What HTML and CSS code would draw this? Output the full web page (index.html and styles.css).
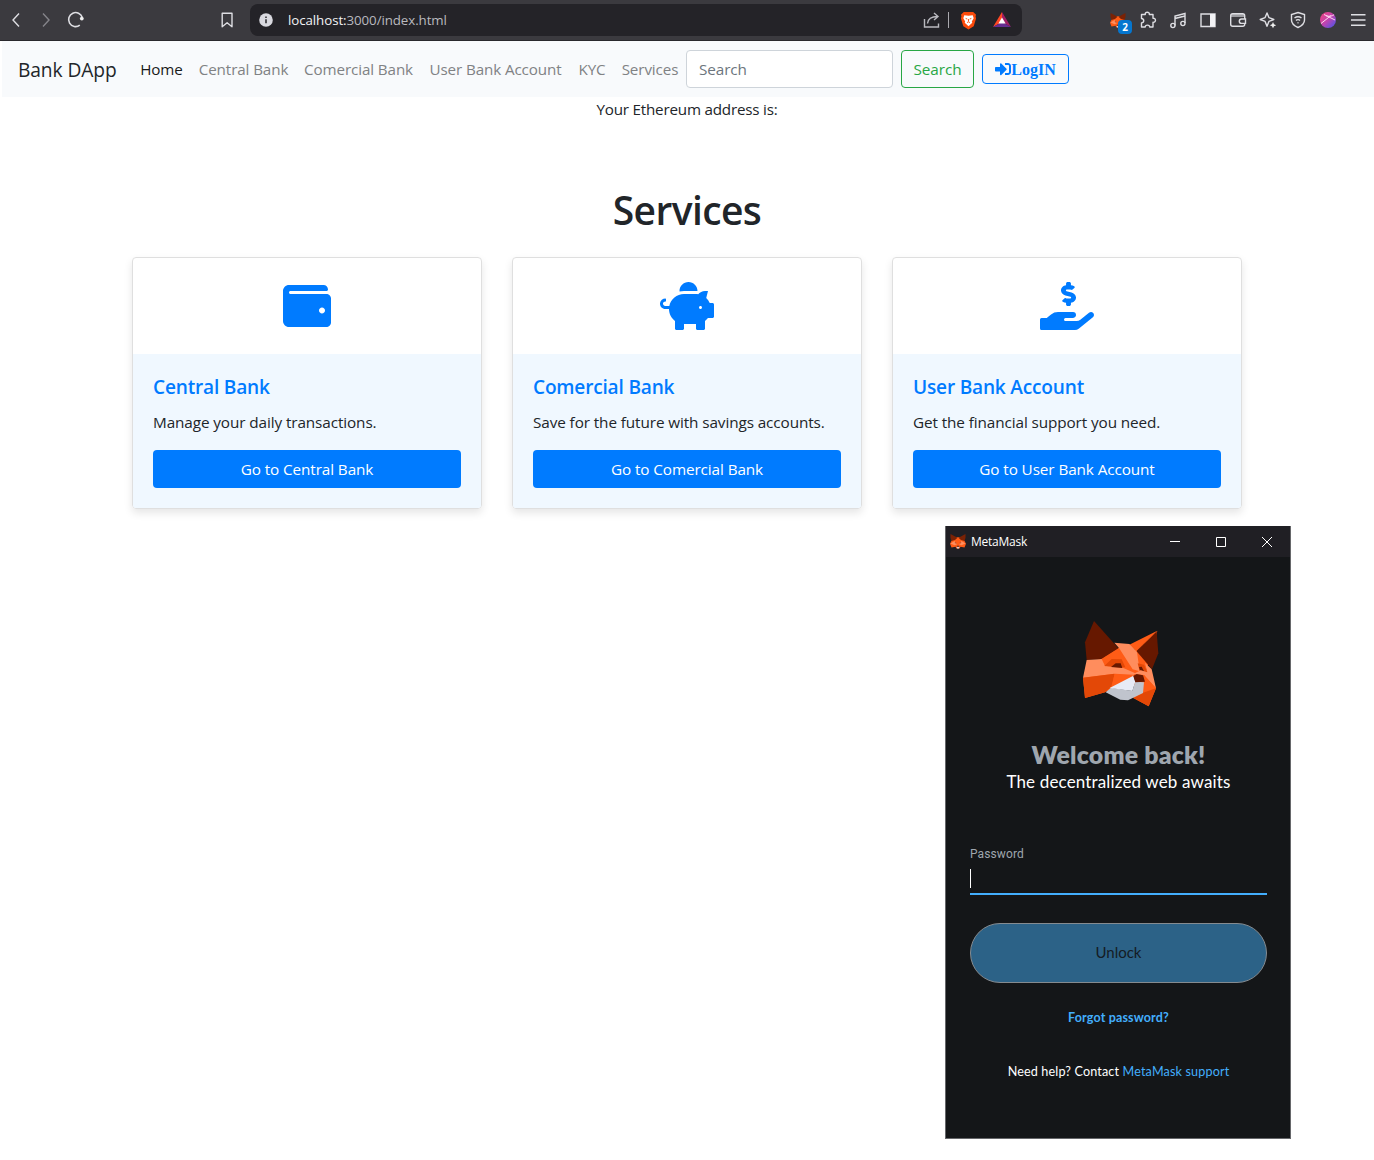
FILE: index.html
```html
<!DOCTYPE html>
<html lang="en">
<head>
<meta charset="utf-8">
<title>Bank DApp</title>
<link rel="stylesheet" href="styles.css">
</head>
<body>
<svg class="defs" width="0" height="0" aria-hidden="true">
  <symbol id="fox" viewBox="0 0 32 32" preserveAspectRatio="none">
    <path fill="#ff5c16" d="M4 13l7-6h10l7 6 4 8-3 8-8-2-2 4h-6l-2-4-8 2-3-8z"/>
    <path fill="#7a2205" d="M1 0l14 8-5 5-7 2-2-7zM31 0l-14 8 5 5 7 2 2-7z"/>
    <path fill="#ff8d5d" d="M1 20l8-5 5 7-5 2zM31 20l-8-5-5 7 5 2z"/>
    <path fill="#8a2a0a" d="M9 17l4 2-1 2zM23 17l-4 2 1 2z"/>
    <path fill="#d9cfd2" d="M13 27h6l-1 4h-4z"/>
    <path fill="#5a2418" d="M14 25h4l1 2h-6z"/>
  </symbol>
</svg>

<header class="browser-bar">
  <div class="nav-buttons">
    <svg viewBox="0 0 20 20"><path d="M13 3.500L7 10l6 6.500"/></svg>
    <svg class="dim" viewBox="0 0 20 20"><path d="M7 3.500l6 6.500-6 6.500"/></svg>
    <svg viewBox="0 0 20 20"><path stroke-width="1.600" d="M13.800 15.200A7 7 0 1 1 16.300 7.500"/><circle cx="15.800" cy="8.600" r="1.900" fill="#eee" stroke="none"/></svg>
  </div>
  <svg class="bookmark" viewBox="0 0 20 20"><path d="M5.200 3.200h9.800v13.600l-4.900-4-4.900 4z" stroke-linejoin="round"/></svg>
  <div class="address">
    <svg class="info" viewBox="0 0 14 14"><circle cx="7" cy="7" r="6.800" fill="#d9d9e0" stroke="none"/><path stroke="#3b3a3f" stroke-width="1.700" d="M7 6.200v4M7 3.400v1.500"/></svg>
    <span class="url"><b>localhost:</b>3000/index.html</span>
    <svg class="share" viewBox="0 0 20 20"><path d="M2.500 9v8h14v-3.500M5.500 13.500C6 8.500 9 6.500 15.500 6.500M12 3l4 3.500-4 3.500"/></svg>
    <i class="divider"></i>
    <svg class="brave" viewBox="0 0 18 20"><path fill="#fb4a0b" stroke="none" d="M4 1h10l3 3-.500 1.500L17 8l-2.500 8L9 19.500 3.500 16 1 8l.500-2.500L1 4z"/><path fill="#fff" stroke="none" d="M4.500 4.500L9 5l4.500-.500 1 3-2 3.500.500 1.500-4 3.500-4-3.500.500-1.500-2-3.500z"/><path stroke="#fb4a0b" stroke-width="1" d="M6 7.800l1.800.700M12 7.800l-1.800.700M9 8.500v2.500M7.500 12.200l1.500-.800 1.500.800"/></svg>
    <svg class="bat" viewBox="0 0 18 16"><path fill="#ff4724" stroke="none" d="M9 0L0 15l9-5z"/><path fill="#9e1f63" stroke="none" d="M9 0l9 15-9-5z"/><path fill="#662d91" stroke="none" d="M0 15h18l-9-5z"/><path fill="#fff" stroke="none" d="M9 5.500l3.600 6H5.400z"/></svg>
  </div>
  <div class="extensions">
    <div class="ext-fox"><svg><use href="#fox"/></svg><span>2</span></div>
    <svg viewBox="0 0 20 20"><path stroke-linejoin="round" d="M4 4.500h3.300C6.500 1.500 12 1.500 11.300 4.500H15v3.800c3.300-.500 3.300 4.500 0 4V17h-3.300c0-2.500-4.500-2.500-4.500 0H3.500v-4c3-.500 3-4 0-4.500V4.500z"/></svg>
    <svg viewBox="0 0 20 20"><path d="M7 15.500V6l10-2.500v9.500M7 8.500L17 6"/><circle cx="4.900" cy="15.500" r="2.100"/><circle cx="14.900" cy="13.500" r="2.100"/></svg>
    <svg viewBox="0 0 20 20"><path d="M3 4h14v12.500H3z"/><path fill="#f2f2f5" stroke="none" d="M12 4h5v12.500h-5z"/></svg>
    <svg viewBox="0 0 20 20"><rect x="2.700" y="3.700" width="14" height="12.600" rx="2"/><path d="M3 5.500h13.500" stroke-width="3" opacity=".6"/><path fill="#3b3a3f" d="M17.500 9h-4a2.200 2.200 0 0 0 0 4.400h4z"/></svg>
    <svg viewBox="0 0 20 20"><path stroke-linejoin="round" d="M9 3l1.900 4.600L15.800 9.500l-4.900 1.900L9 16.300l-1.900-4.900-4.900-1.900 4.900-1.900z"/><path fill="#eee" stroke="none" d="M15 12l1 2.200 2.200 1-2.200 1L15 18.300l-1-2.100-2.200-1 2.200-1z"/></svg>
    <svg viewBox="0 0 20 20"><path d="M10 2.500l6.500 2V10c0 4-3 6-6.500 7.500C6.500 16 3.500 14 3.500 10V4.500z"/><path d="M6.500 8c2-1.500 5-1.500 7 0M8 10.500c1-1 3-1 4 0M9.500 12.700h1"/></svg>
    <svg viewBox="0 0 20 20"><defs><linearGradient id="avatar" x2="1" y2="1"><stop stop-color="#f5437a"/><stop offset=".5" stop-color="#c044b0"/><stop offset="1" stop-color="#3d55ee"/></linearGradient></defs><circle cx="10" cy="10" r="8" fill="url(#avatar)" stroke="none"/><path stroke-width="1" stroke="#ffd5ef" d="M8 5.800c3 .800 6 .500 8-1M6 4.500l11 5.500M3 13.500L13 5.500"/></svg>
    <svg viewBox="0 0 20 20"><path d="M3 4.700h14.500M3 10h14.500M3 15.300h14.500"/></svg>
  </div>
</header>

<nav class="navbar">
  <a class="brand">Bank DApp</a>
  <div class="links">
    <a class="w-home active">Home</a>
    <a class="w-central">Central Bank</a>
    <a class="w-comercial">Comercial Bank</a>
    <a class="w-user">User Bank Account</a>
    <a class="w-kyc">KYC</a>
    <a class="w-services">Services</a>
  </div>
  <input class="search" type="text" placeholder="Search">
  <button class="btn-search">Search</button>
  <button class="btn-login"><svg viewBox="0 0 512 512"><path d="M416 448h-84c-6.600 0-12-5.400-12-12v-40c0-6.600 5.400-12 12-12h84c17.700 0 32-14.300 32-32V160c0-17.700-14.300-32-32-32h-84c-6.600 0-12-5.400-12-12V76c0-6.600 5.400-12 12-12h84c53 0 96 43 96 96v192c0 53-43 96-96 96zm-47-201L201 79c-15-15-41-4.500-41 17v96H24c-13.300 0-24 10.700-24 24v96c0 13.300 10.700 24 24 24h136v96c0 21.500 26 32 41 17l168-168c9.300-9.400 9.300-24.600 0-34z"/></svg><span>LogIN</span></button>
</nav>

<main>
  <p class="eth">Your Ethereum address is:</p>
  <h1>Services</h1>
  <section class="cards">
    <article class="card">
      <div class="card-icon"><svg width="48" height="48" viewBox="0 0 512 512"><path d="M461.200 128H80c-8.840 0-16-7.160-16-16s7.160-16 16-16h384c8.840 0 16-7.160 16-16 0-26.510-21.490-48-48-48H64C28.650 32 0 60.650 0 96v320c0 35.350 28.650 64 64 64h397.200c28.020 0 50.800-21.530 50.800-48V176c0-26.470-22.780-48-50.800-48zM416 336c-17.670 0-32-14.330-32-32s14.330-32 32-32 32 14.330 32 32-14.330 32-32 32z"/></svg></div>
      <div class="card-body"><h5>Central Bank</h5><p>Manage your daily transactions.</p><a class="go">Go to Central Bank</a></div>
    </article>
    <article class="card">
      <div class="card-icon"><svg width="54" height="48" viewBox="0 0 576 512"><path d="M560 224h-29.500c-8.800-20-21.600-37.700-37.400-52.500L512 96h-32c-29.400 0-55.400 13.500-73 34.300-7.600-1.100-15.100-2.300-23-2.300H256c-77.400 0-141.900 55-156.800 128H56c-14.800 0-26.500-13.500-23.500-28.800C34.700 215.800 45.400 208 57 208h1c3.300 0 6-2.700 6-6v-20c0-3.300-2.700-6-6-6-28.500 0-53.900 20.400-57.500 48.600C-3.900 258.800 22.700 288 56 288h40c0 52.200 25.400 98.100 64 127.300V496c0 8.800 7.200 16 16 16h64c8.800 0 16-7.200 16-16v-48h128v48c0 8.800 7.200 16 16 16h64c8.800 0 16-7.200 16-16v-80.700c11.800-8.900 22.300-19.400 31.300-31.300H560c8.800 0 16-7.200 16-16V240c0-8.800-7.200-16-16-16zm-128 64c-8.800 0-16-7.200-16-16s7.200-16 16-16 16 7.200 16 16-7.200 16-16 16zM256 96h128c5.400 0 10.700.4 15.900.8 0-.3.1-.5.1-.8 0-53-43-96-96-96s-96 43-96 96c0 2.100.5 4.100.6 6.200 15.200-3.900 31-6.200 47.400-6.200z"/></svg></div>
      <div class="card-body"><h5>Comercial Bank</h5><p>Save for the future with savings accounts.</p><a class="go">Go to Comercial Bank</a></div>
    </article>
    <article class="card">
      <div class="card-icon"><svg width="54" height="48" viewBox="0 0 576 512"><path d="M271.060,144.300l54.270,14.300a8.590,8.590,0,0,1,6.630,8.100c0,4.600-4.090,8.400-9.120,8.400h-35.600a30,30,0,0,1-11.190-2.200c-5.240-2.200-11.280-1.700-15.300,2l-19,17.500a11.680,11.680,0,0,0-2.250,2.660,11.420,11.420,0,0,0,3.880,15.740,83.770,83.770,0,0,0,34.510,11.500V240c0,8.800,7.830,16,17.370,16h17.370c9.550,0,17.380-7.200,17.380-16V222.400c32.930-3.600,57.840-31,53.500-63-3.150-23-22.460-41.300-46.560-47.700L282.680,97.400a8.590,8.590,0,0,1-6.630-8.100c0-4.600,4.090-8.400,9.120-8.400h35.600A30,30,0,0,1,332,83.100c5.230,2.200,11.280,1.700,15.300-2l19-17.500A11.310,11.310,0,0,0,368.470,61a11.430,11.430,0,0,0-3.840-15.780,83.820,83.820,0,0,0-34.520-11.500V16c0-8.800-7.820-16-17.370-16H295.370C285.820,0,278,7.200,278,16V33.600c-32.890,3.600-57.850,31-53.510,63C227.630,119.600,247,137.900,271.060,144.300ZM565.270,328.100c-11.800-10.700-30.200-10-42.600,0L430.270,402a63.640,63.640,0,0,1-40,14H272a16,16,0,0,1,0-32h78.290c15.900,0,30.710-10.900,33.250-26.600a31.200,31.200,0,0,0,.46-5.460A32,32,0,0,0,352,320H192a117.660,117.660,0,0,0-74.100,26.290L71.400,384H16A16,16,0,0,0,0,400v96a16,16,0,0,0,16,16H372.770a64,64,0,0,0,40-14L564,377a32,32,0,0,0,1.280-48.900Z"/></svg></div>
      <div class="card-body"><h5>User Bank Account</h5><p>Get the financial support you need.</p><a class="go">Go to User Bank Account</a></div>
    </article>
  </section>
</main>

<aside class="wallet">
  <div class="titlebar">
    <svg class="title-fox"><use href="#fox"/></svg>
    <span>MetaMask</span>
    <div class="controls">
      <svg viewBox="0 0 46 31"><path d="M18 15.500h10"/></svg>
      <svg viewBox="0 0 46 31"><path d="M18.500 11.500h9v9h-9z"/></svg>
      <svg viewBox="0 0 46 31"><path d="M18 11l10 10M28 11L18 21"/></svg>
    </div>
  </div>
  <div class="wallet-body">
    <svg class="big-fox" viewBox="0 0 300 315">
      <path fill="#ff5c16" d="M95 145L145 113 200 120 262 63 230 178 258 235 236 289 190 264 195 200 105 247 45 264 39 203z"/>
      <path fill="#661800" d="M72 33L145 115 95 146 50 150 45 97z"/>
      <path fill="#661800" d="M260 65L265 130 246 178 199 123z"/>
      <path fill="#ff5c16" d="M262 62L199 123 175 106z"/>
      <path fill="#ff8d5d" d="M133 98L178 102 201 126 209 184 188 178 147 114z"/>
      <path fill="#ff8d5d" d="M50 150L95 147 105 168 190 194 134 191 39 203z"/>
      <path fill="#e34807" d="M39 203L134 191 124 230 105 247 45 264z"/>
      <path fill="#ff8d5d" d="M105 168L160 174 196 190 188 197 134 191z"/>
      <path fill="#ff5c16" d="M134 191L190 194 124 235z"/>
      <path fill="#e34807" d="M103 168L125 147 155 148 166 172z"/>
      <path fill="#661800" d="M123 171L137 160 152 160 157 174z"/>
      <path fill="#e34807" d="M203 160L222 164 232 187 209 184z"/>
      <path fill="#661800" d="M207 171L215 170 222 184 210 181z"/>
      <path fill="#ff8d5d" d="M225 158L245 178 258 235 222 195 190 192 212 181 232 187z"/>
      <path fill="#ff5c16" d="M222 195L258 235 219 248z"/>
      <path fill="#e34807" d="M219 248L258 235 236 289 190 264z"/>
      <path fill="#c0c4cd" d="M107 247L123 233 187 243 196 215 222 217 219 249 174 271 151 269z"/>
      <path fill="#e7ebf6" d="M190 197L196 215 187 243 119 234z"/>
      <path fill="#661800" d="M190 198L200 192 219 196 225 215 196 217z"/>
    </svg>
    <h2>Welcome back!</h2>
    <p class="tagline">The decentralized web awaits</p>
    <label>Password</label>
    <div class="password"><i></i></div>
    <button class="unlock">Unlock</button>
    <a class="forgot">Forgot password?</a>
    <p class="help">Need help? Contact <a>MetaMask support</a></p>
  </div>
</aside>
</body>
</html>
```
FILE: styles.css
```css
* { box-sizing: border-box; }
body {
  margin: 0;
  height: 1160px;
  overflow: hidden;
  background: #fff;
  color: #212529;
  font: 15.3px/24px "Open Sans", sans-serif;
  letter-spacing: -0.1px;
  white-space: nowrap;
}
h1, h2, h5, p { margin: 0; }
button { font: inherit; letter-spacing: inherit; background: none; padding: 0; }
.defs { position: absolute; }

/* browser toolbar */
.browser-bar {
  height: 41px;
  background: #3b3a3f;
  border-bottom: 1px solid #29282d;
  display: flex;
  align-items: center;
}
.browser-bar svg { fill: none; stroke: #dedee3; stroke-width: 1.4; flex: none; }
.nav-buttons { display: flex; gap: 10px; padding-left: 6px; }
.nav-buttons svg, .bookmark, .extensions > svg { width: 20px; height: 20px; }
.browser-bar .dim { stroke: #85848a; }
.bookmark { margin-left: 131px; }
.address {
  width: 772px;
  height: 32px;
  margin-left: 13px;
  border-radius: 8px;
  background: #242328;
  display: flex;
  align-items: center;
  padding: 0 11px 0 9px;
}
.info { width: 14px; height: 14px; }
.url { margin-left: 15px; color: #b9b9bf; font-size: 13.3px; letter-spacing: -0.07px; }
.url b { color: #f2f2f5; font-weight: 400; }
.share { width: 20px; height: 20px; margin-left: auto; }
.browser-bar .share { stroke: #b9b9bf; }
.divider { width: 1px; height: 16px; background: #aaa9af; margin: 0 11px 0 6px; }
.brave { width: 17px; height: 19px; }
.bat { width: 18px; height: 16px; margin: 0 0 0 16px; }
.extensions { display: flex; gap: 10px; align-items: center; margin-left: auto; padding-right: 6px; }
.ext-fox { width: 20px; height: 20px; position: relative; }
.ext-fox svg { width: 16px; height: 15px; display: block; margin: 3px 0 0 2px; stroke: none; }
.ext-fox span {
  position: absolute;
  left: 10px;
  top: 10px;
  width: 14px;
  height: 14px;
  border-radius: 4px;
  background: #0576cf;
  color: #fff;
  font: bold 10px/14px "Open Sans", sans-serif;
  text-align: center;
}

/* site navigation */
.navbar {
  height: 56px;
  margin-left: 2px;
  padding: 0 16px;
  background: #f8fafc;
  display: flex;
  align-items: center;
}
.brand { width: 114px; font-size: 19.2px; line-height: 30px; padding-top: 1px; }
.links { display: flex; color: #808284; font-size: 15.2px; }
.links a { text-align: center; }
.links .active { color: #191a1a; }
.w-home { width: 59px; }
.w-central { width: 105px; }
.w-comercial { width: 125px; }
.w-user { width: 149px; }
.w-kyc { width: 44px; }
.w-services { width: 72px; }
.search {
  width: 207px;
  height: 38px;
  border: 1px solid #ced4da;
  border-radius: 4px;
  padding: 0 12px;
  font: inherit;
  letter-spacing: inherit;
}
.search::placeholder { color: #6c757d; opacity: 1; }
.btn-search {
  width: 73px;
  height: 38px;
  margin: 0 8px;
  border: 1px solid #28a745;
  border-radius: 4px;
  color: #28a745;
}
.btn-login {
  width: 87px;
  height: 30px;
  border: 1px solid #007bff;
  border-radius: 4px;
  color: #007bff;
  font: bold 16px/16px "Liberation Serif", serif;
  letter-spacing: 0;
  display: flex;
  align-items: center;
  justify-content: center;
}
.btn-login svg { width: 16px; height: 16px; fill: #007bff; }
.btn-login span { padding-top: 2px; }

/* services */
.eth { text-align: center; font-size: 15.2px; letter-spacing: -0.2px; }
h1 {
  margin: 65px 0 23px;
  text-align: center;
  font-weight: 560;
  font-size: 39px;
  line-height: 48px;
  letter-spacing: -0.6px;
}
.cards { width: 1110px; margin: 0 auto; display: grid; grid-template-columns: repeat(3, 1fr); gap: 30px; }
.card {
  border: 1px solid #dfdfdf;
  border-radius: 4px;
  box-shadow: 0 4px 8px rgba(0, 0, 0, 0.1);
  overflow: hidden;
}
.card-icon { height: 96px; display: flex; align-items: center; justify-content: center; }
.card-icon svg { fill: #007bff; }
.card-body { padding: 20px; background: #f0f8ff; }
.card-body p { margin: 11px 0 16px; }
h5 { padding-top: 1px; color: #007bff; font-size: 19.1px; line-height: 24px; font-weight: 580; letter-spacing: -0.2px; }
.go {
  display: block;
  height: 38px;
  line-height: 38px;
  border-radius: 4px;
  background: #007bff;
  color: #fff;
  text-align: center;
}

/* floating wallet window */
.wallet {
  position: absolute;
  left: 945px;
  top: 526px;
  width: 346px;
  height: 613px;
  border: 1px solid #66676a;
  border-top: 0;
  background: #141618;
  color: #fff;
}
.titlebar {
  height: 31px;
  background: #201f24;
  display: flex;
  align-items: center;
  padding-left: 4px;
  font-size: 12px;
  letter-spacing: -0.25px;
}
.title-fox { width: 16px; height: 15px; margin-right: 5px; }
.controls { display: flex; margin-left: auto; }
.controls svg { width: 46px; height: 31px; fill: none; stroke: #fff; stroke-width: 1; }
.wallet-body {
  padding: 53px 23px 0 24px;
  display: flex;
  flex-direction: column;
  align-items: center;
  font-family: Lato, sans-serif;
  letter-spacing: 0;
}
.big-fox { width: 100px; height: 105px; margin-left: 3px; }
h2 { margin-top: 23px; color: #9fa6ae; font-size: 24.8px; line-height: 34px; font-weight: 800; letter-spacing: 0.2px; }
.tagline { font-size: 17px; line-height: 20px; letter-spacing: 0.15px; }
label {
  align-self: flex-start;
  margin-top: 53px;
  color: #9fa6ae;
  font: 12px/18px Roboto, sans-serif;
  letter-spacing: 0.1px;
}
.password { width: 297px; height: 32px; border-bottom: 2px solid #43aefc; }
.password i { display: block; width: 1px; height: 19px; margin-top: 6px; background: #fff; }
.unlock {
  width: 297px;
  height: 60px;
  margin-top: 28px;
  border: 1px solid #858b90;
  border-radius: 30px;
  background: #2c6287;
  color: #141c24;
  font-size: 15px;
  padding-bottom: 3px;
}
.forgot { margin-top: 25px; line-height: 20px; color: #43aefc; font-size: 12.5px; font-weight: 700; letter-spacing: 0.15px; }
.help { margin-top: 34px; line-height: 20px; font-size: 12.6px; letter-spacing: 0.15px; }
.help a { color: #43aefc; }
```
